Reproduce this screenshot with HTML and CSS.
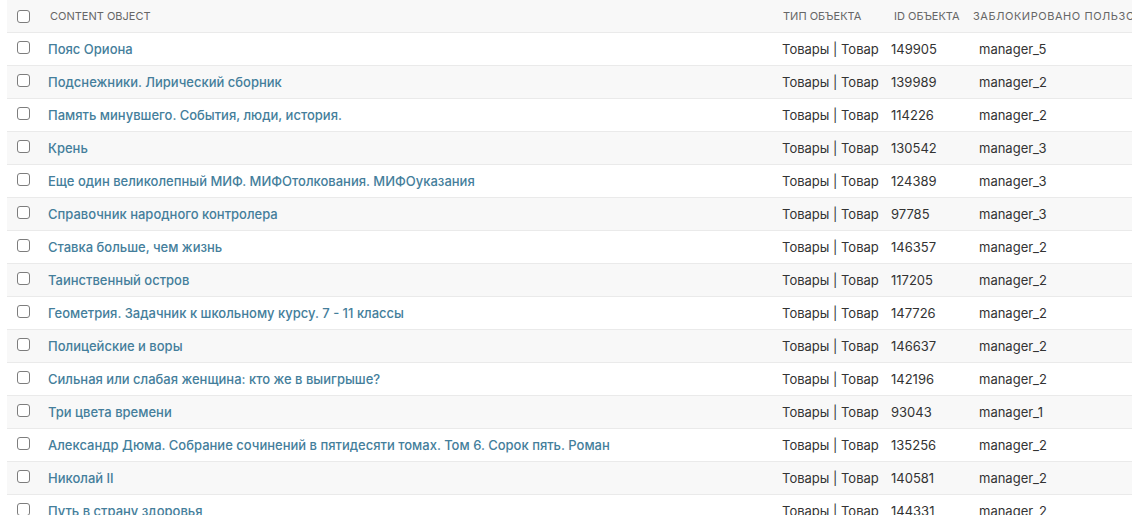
FILE: index.html
```html
<!DOCTYPE html>
<html lang="ru">
<head>
<meta charset="utf-8">
<title>Заблокированные объекты</title>
<link rel="stylesheet" href="styles.css">
</head>
<body>
<div class="results">
  <div class="head">
    <div class="cell chk"><span class="box"></span></div>
    <div class="cell">Content object</div>
    <div class="cell">Тип объекта</div>
    <div class="cell">ID объекта</div>
    <div class="cell wide">Заблокировано пользователем</div>
  </div>
  <div class="row"><div class="cell chk"><span class="box"></span></div><div class="cell"><a href="#">Пояс Ориона</a></div><div class="cell">Товары | Товар</div><div class="cell">149905</div><div class="cell">manager_5</div></div>
  <div class="row"><div class="cell chk"><span class="box"></span></div><div class="cell"><a href="#">Подснежники. Лирический сборник</a></div><div class="cell">Товары | Товар</div><div class="cell">139989</div><div class="cell">manager_2</div></div>
  <div class="row"><div class="cell chk"><span class="box"></span></div><div class="cell"><a href="#">Память минувшего. События, люди, история.</a></div><div class="cell">Товары | Товар</div><div class="cell">114226</div><div class="cell">manager_2</div></div>
  <div class="row"><div class="cell chk"><span class="box"></span></div><div class="cell"><a href="#">Крень</a></div><div class="cell">Товары | Товар</div><div class="cell">130542</div><div class="cell">manager_3</div></div>
  <div class="row"><div class="cell chk"><span class="box"></span></div><div class="cell"><a href="#">Еще один великолепный МИФ. МИФОтолкования. МИФОуказания</a></div><div class="cell">Товары | Товар</div><div class="cell">124389</div><div class="cell">manager_3</div></div>
  <div class="row"><div class="cell chk"><span class="box"></span></div><div class="cell"><a href="#">Справочник народного контролера</a></div><div class="cell">Товары | Товар</div><div class="cell">97785</div><div class="cell">manager_3</div></div>
  <div class="row"><div class="cell chk"><span class="box"></span></div><div class="cell"><a href="#">Ставка больше, чем жизнь</a></div><div class="cell">Товары | Товар</div><div class="cell">146357</div><div class="cell">manager_2</div></div>
  <div class="row"><div class="cell chk"><span class="box"></span></div><div class="cell"><a href="#">Таинственный остров</a></div><div class="cell">Товары | Товар</div><div class="cell">117205</div><div class="cell">manager_2</div></div>
  <div class="row"><div class="cell chk"><span class="box"></span></div><div class="cell"><a href="#">Геометрия. Задачник к школьному курсу. 7 - 11 классы</a></div><div class="cell">Товары | Товар</div><div class="cell">147726</div><div class="cell">manager_2</div></div>
  <div class="row"><div class="cell chk"><span class="box"></span></div><div class="cell"><a href="#">Полицейские и воры</a></div><div class="cell">Товары | Товар</div><div class="cell">146637</div><div class="cell">manager_2</div></div>
  <div class="row"><div class="cell chk"><span class="box"></span></div><div class="cell"><a href="#">Сильная или слабая женщина: кто же в выигрыше?</a></div><div class="cell">Товары | Товар</div><div class="cell">142196</div><div class="cell">manager_2</div></div>
  <div class="row"><div class="cell chk"><span class="box"></span></div><div class="cell"><a href="#">Три цвета времени</a></div><div class="cell">Товары | Товар</div><div class="cell">93043</div><div class="cell">manager_1</div></div>
  <div class="row"><div class="cell chk"><span class="box"></span></div><div class="cell"><a href="#">Александр Дюма. Собрание сочинений в пятидесяти томах. Том 6. Сорок пять. Роман</a></div><div class="cell">Товары | Товар</div><div class="cell">135256</div><div class="cell">manager_2</div></div>
  <div class="row"><div class="cell chk"><span class="box"></span></div><div class="cell"><a href="#">Николай II</a></div><div class="cell">Товары | Товар</div><div class="cell">140581</div><div class="cell">manager_2</div></div>
  <div class="row"><div class="cell chk"><span class="box"></span></div><div class="cell"><a href="#">Путь в страну здоровья</a></div><div class="cell">Товары | Товар</div><div class="cell">144331</div><div class="cell">manager_2</div></div>
</div>
</body>
</html>
```

FILE: styles.css
```css
html, body {
  margin: 0;
  padding: 0;
  overflow: hidden;
  background: #fff;
}
body {
  font-family: Inter, "Liberation Sans", sans-serif;
  font-size: 13px;
  color: #333;
}
.results {
  margin-left: 7px;
  width: 1300px;
}
.head, .row {
  display: grid;
  border-bottom: 1px solid #eaeaea;
}
.head {
  grid-template-columns: 33px 733px 111px 79px 1fr;
  height: 32px;
  align-items: center;
  background: #f8f8f8;
  color: #666;
  font-size: 11px;
  text-transform: uppercase;
  white-space: nowrap;
}
.row {
  grid-template-columns: 31px 734px 109px 88px 1fr;
  height: 32px;
}
.row:nth-child(odd) {
  background: #f8f8f8;
}
.cell {
  padding-left: 10px;
  white-space: nowrap;
  overflow: hidden;
}
.row .cell {
  padding-top: 8px;
  line-height: 16px;
}
.head .cell {
  line-height: 16px;
}
.head .wide {
  letter-spacing: 0.55px;
}
.head .chk {
  display: flex;
  align-items: center;
  padding-top: 1px;
}
.box {
  display: block;
  width: 13px;
  height: 13px;
  box-sizing: border-box;
  border: 1px solid #7d7d7d;
  border-radius: 3px;
  background: #fff;
}
.row .chk {
  padding-top: 8px;
}
a {
  color: #447e9b;
  text-decoration: none;
  font-weight: 500;
}
```
